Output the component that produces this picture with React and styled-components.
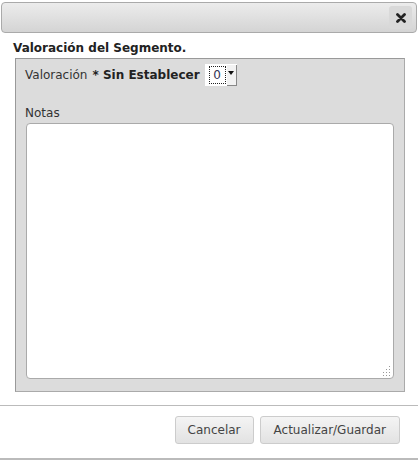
import React from "react";
import styled, { createGlobalStyle } from "styled-components";

const GlobalStyle = createGlobalStyle`
  html, body {
    margin: 0;
    padding: 0;
    background: #fff;
  }
  body {
    font-family: "DejaVu Sans", Verdana, sans-serif;
    font-size: 12px;
    color: #333;
  }
`;

const Dialog = styled.div`
  width: 418px;
  height: 460px;
  box-sizing: border-box;
  border-bottom: 2px solid #bbb;
  display: flex;
  flex-direction: column;
`;

const TitleBar = styled.div`
  margin: 2px 1px 0 1px;
  height: 31px;
  box-sizing: border-box;
  border: 1px solid #aaa;
  border-radius: 4px;
  background: linear-gradient(to bottom, #ececec 0%, #d4d4d4 100%);
  display: flex;
  align-items: center;
  justify-content: flex-end;
  padding-right: 4px;
`;

const CloseButton = styled.button`
  width: 23px;
  height: 23px;
  border: none;
  border-radius: 3px;
  background: #d9d9d9;
  padding: 0;
  display: flex;
  align-items: center;
  justify-content: center;
  cursor: pointer;
`;

const Content = styled.div`
  padding: 7px 0 0 13px;
`;

const Heading = styled.h3`
  margin: 0;
  font-size: 12px;
  font-weight: bold;
  color: #222;
  line-height: 16px;
`;

const Panel = styled.div`
  margin: 2px 0 0 2px;
  width: 390px;
  height: 334px;
  box-sizing: border-box;
  background: #dcdcdc;
  border: 1px solid #999;
  border-right-color: #aaa;
  border-bottom-color: #aaa;
  padding: 5px 10px 12px 9px;
  display: flex;
  flex-direction: column;
`;

const FieldRow = styled.div`
  display: flex;
  align-items: center;
  height: 22px;
  color: #333;
`;

const Strong = styled.b`
  color: #222;
  margin: 0 5px 0 5px;
`;

const Select = styled.div`
  width: 32px;
  height: 22px;
  box-sizing: border-box;
  background: #fff;
  display: flex;
  align-items: center;
  padding: 0 0 0 4px;
`;

const SelectValue = styled.span`
  width: 17px;
  height: 18px;
  box-sizing: border-box;
  border: 1px dotted #222;
  display: flex;
  align-items: center;
  justify-content: center;
  color: #335;
  font-size: 12px;
  line-height: 14px;
`;

const SelectArrow = styled.span`
  margin-left: 1px;
  width: 10px;
  height: 21px;
  box-sizing: border-box;
  background: #f2f2f2;
  border-right: 1px solid #888;
  border-bottom: 1px solid #888;
  display: flex;
  align-items: center;
  justify-content: center;
  padding-bottom: 3px;
`;

const Label = styled.label`
  display: block;
  margin: 19px 0 0 0;
  line-height: 16px;
  color: #333;
`;

const AreaWrap = styled.div`
  position: relative;
  margin: 2px 0 0 1px;
  flex: 1;
  display: flex;
`;

const TextArea = styled.textarea`
  flex: 1;
  box-sizing: border-box;
  border: 1px solid #aaa;
  border-radius: 4px;
  background: #fff;
  resize: none;
  font-family: inherit;
  font-size: 12px;
  outline: none;
`;

const Grip = styled.svg`
  position: absolute;
  right: 3px;
  bottom: 3px;
`;

const ButtonBar = styled.div`
  margin-top: 13px;
  border-top: 1px solid #bbb;
  display: flex;
  justify-content: flex-end;
  gap: 6px;
  padding: 10px 18px 0 0;
`;

const Button = styled.button`
  height: 28px;
  box-sizing: border-box;
  padding: 0 ${(p) => p.$pad}px;
  border: 1px solid #ccc;
  border-radius: 3px;
  background: linear-gradient(to bottom, #f4f4f4 0%, #e2e2e2 100%);
  font-family: inherit;
  font-size: 12px;
  color: #444;
  cursor: pointer;
`;

export default function App() {
  return (
    <>
      <GlobalStyle />
      <Dialog>
        <TitleBar>
          <CloseButton aria-label="Cerrar">
            <svg width="10" height="10" viewBox="0 0 10 10">
              <path d="M1.5 1.5 L8.5 8.5 M8.5 1.5 L1.5 8.5" stroke="#222" strokeWidth="2.8" strokeLinecap="round" />
            </svg>
          </CloseButton>
        </TitleBar>
        <Content>
          <Heading>Valoración del Segmento.</Heading>
          <Panel>
            <FieldRow>
              Valoración
              <Strong>* Sin Establecer</Strong>
              <Select>
                <SelectValue>0</SelectValue>
                <SelectArrow>
                  <svg width="6" height="4" viewBox="0 0 6 4">
                    <path d="M0 0 H6 L3 4 Z" fill="#111" />
                  </svg>
                </SelectArrow>
              </Select>
            </FieldRow>
            <Label>Notas</Label>
            <AreaWrap>
              <TextArea />
              <Grip width="10" height="10" viewBox="0 0 10 10">
                {[[8, 0], [8, 3], [5, 3], [8, 6], [5, 6], [2, 6], [8, 9], [5, 9], [2, 9]].map(([x, y], i) => (
                  <rect key={i} x={x} y={y} width="1" height="1" fill="#999" />
                ))}
              </Grip>
            </AreaWrap>
          </Panel>
        </Content>
        <ButtonBar>
          <Button $pad={12}>Cancelar</Button>
          <Button $pad={13}>Actualizar/Guardar</Button>
        </ButtonBar>
      </Dialog>
    </>
  );
}
